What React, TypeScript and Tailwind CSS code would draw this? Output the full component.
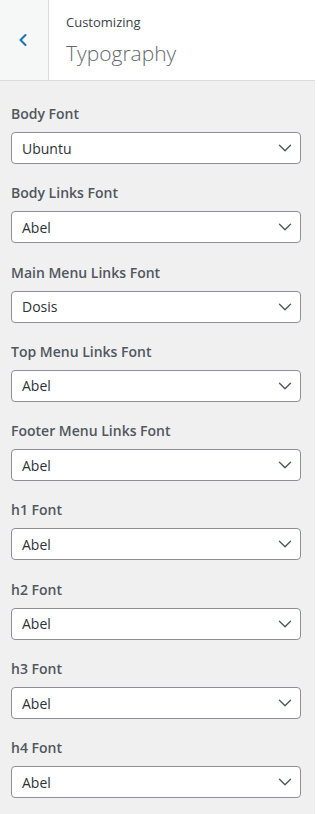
import { ChevronDown, ChevronLeft } from 'lucide-react';

const fields = [
    { label: 'Body Font', value: 'Ubuntu' },
    { label: 'Body Links Font', value: 'Abel' },
    { label: 'Main Menu Links Font', value: 'Dosis' },
    { label: 'Top Menu Links Font', value: 'Abel' },
    { label: 'Footer Menu Links Font', value: 'Abel' },
    { label: 'h1 Font', value: 'Abel' },
    { label: 'h2 Font', value: 'Abel' },
    { label: 'h3 Font', value: 'Abel' },
    { label: 'h4 Font', value: 'Abel' },
];

export default function App() {
    return (
        <div className="min-h-screen w-[318px] bg-white flex font-['Open_Sans',sans-serif]">
            <div className="w-[315px] min-h-[814px] bg-[#f0f0f1]">
                <div className="h-[81px] flex bg-white border-b border-[#dcdcde]">
                    <button className="w-[49px] h-full bg-[#f6f7f7] border-r border-[#dcdcde] flex items-center justify-center pr-[3px] text-[#2271b1]">
                        <ChevronLeft size={20} strokeWidth={2.5} />
                    </button>
                    <div className="pl-[17px] pt-[13px]">
                        <div className="text-[13px] leading-[18px] text-[#3c434a]">Customizing</div>
                        <div className="text-[21px] leading-[28px] mt-[8px] text-[#646970] font-light">Typography</div>
                    </div>
                </div>
                <div className="pl-[11px] pr-[14px] pt-[23px]">
                    {fields.map((f) => (
                        <div key={f.label} className="mb-[19.3px]">
                            <div className="text-[14px] leading-[20px] font-semibold text-[#50575e]">{f.label}</div>
                            <div className="mt-[8px] h-[32px] bg-white border border-[#8c8f94] rounded-[4px] flex items-center justify-between pl-[10px] pr-[4px]">
                                <span className="text-[14px] text-[#2c3338]">{f.value}</span>
                                <ChevronDown size={22} strokeWidth={1.5} className="text-[#50575e]" />
                            </div>
                        </div>
                    ))}
                </div>
            </div>
        </div>
    );
}
